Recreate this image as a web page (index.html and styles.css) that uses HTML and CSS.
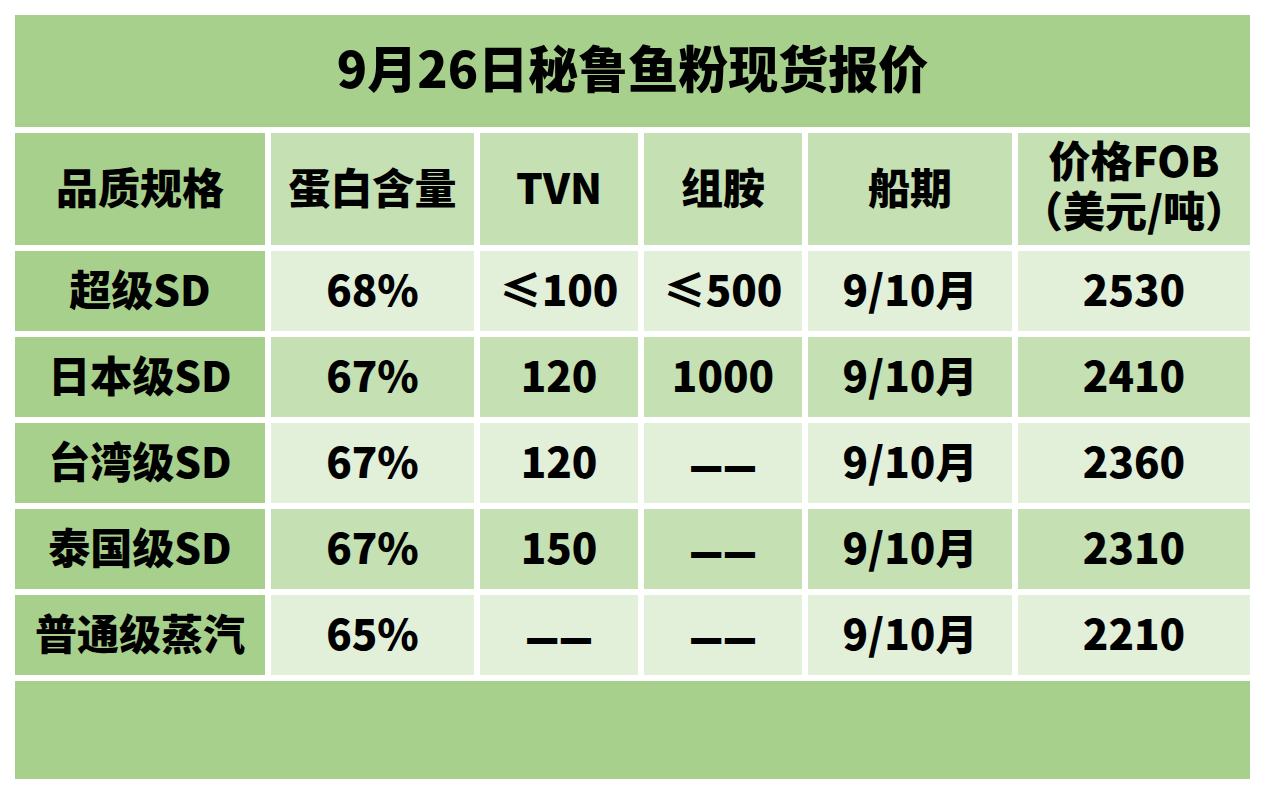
FILE: index.html
```html
<!DOCTYPE html>
<html lang="zh-CN">
<head>
<meta charset="utf-8">
<title>9月26日秘鲁鱼粉现货报价</title>
<link rel="stylesheet" href="styles.css">
</head>
<body>
<div class="sheet">
  <div class="band title">9月26日秘鲁鱼粉现货报价</div>

  <div class="cell key">品质规格</div>
  <div class="cell mid">蛋白含量</div>
  <div class="cell mid">TVN</div>
  <div class="cell mid">组胺</div>
  <div class="cell mid">船期</div>
  <div class="cell mid two"><span>价格FOB</span><span>（美元/吨）</span></div>

  <div class="cell key">超级SD</div>
  <div class="cell light">68%</div>
  <div class="cell light">≤100</div>
  <div class="cell light">≤500</div>
  <div class="cell light">9/10月</div>
  <div class="cell light">2530</div>

  <div class="cell key">日本级SD</div>
  <div class="cell mid">67%</div>
  <div class="cell mid">120</div>
  <div class="cell mid">1000</div>
  <div class="cell mid">9/10月</div>
  <div class="cell mid">2410</div>

  <div class="cell key">台湾级SD</div>
  <div class="cell light">67%</div>
  <div class="cell light">120</div>
  <div class="cell light"><span class="dash"><i>—</i><i>—</i></span></div>
  <div class="cell light">9/10月</div>
  <div class="cell light">2360</div>

  <div class="cell key">泰国级SD</div>
  <div class="cell mid">67%</div>
  <div class="cell mid">150</div>
  <div class="cell mid"><span class="dash"><i>—</i><i>—</i></span></div>
  <div class="cell mid">9/10月</div>
  <div class="cell mid">2310</div>

  <div class="cell key">普通级蒸汽</div>
  <div class="cell light">65%</div>
  <div class="cell light"><span class="dash"><i>—</i><i>—</i></span></div>
  <div class="cell light"><span class="dash"><i>—</i><i>—</i></span></div>
  <div class="cell light">9/10月</div>
  <div class="cell light">2210</div>

  <div class="band foot"></div>
</div>
</body>
</html>
```
FILE: styles.css
```css
html, body {
  margin: 0;
  padding: 0;
  background: #ffffff;
}

body {
  padding: 15px;
  font-family: "Noto Sans CJK SC", "Noto Sans", sans-serif;
  font-weight: 900;
  color: #000000;
}

.sheet {
  display: grid;
  grid-template-columns: 250px 203px 158px 158px 204px 232px;
  grid-template-rows: 112px 112px 80px 80px 80px 80px 80px 98px;
  gap: 6px;
  width: 1235px;
}

.band {
  grid-column: 1 / -1;
  background: #a8d08d;
}

.title {
  display: flex;
  align-items: center;
  justify-content: center;
  font-size: 50px;
  line-height: 1;
  padding-bottom: 10px;
}

.cell {
  display: flex;
  align-items: center;
  justify-content: center;
  text-align: center;
  font-size: 42px;
  line-height: 50px;
  white-space: nowrap;
  padding-bottom: 6px;
  box-sizing: border-box;
}

.two {
  flex-direction: column;
  padding-bottom: 10px;
}

.two span {
  display: block;
  line-height: 50px;
}

.dash {
  display: inline-flex;
  margin-top: 4px;
}

.dash i {
  font-style: normal;
  font-size: 37px;
  display: inline-block;
  transform: scaleY(1.45);
}

.key {
  background: #a8d08d;
}

.mid {
  background: #c5e0b3;
}

.light {
  background: #e2efd9;
}
```
